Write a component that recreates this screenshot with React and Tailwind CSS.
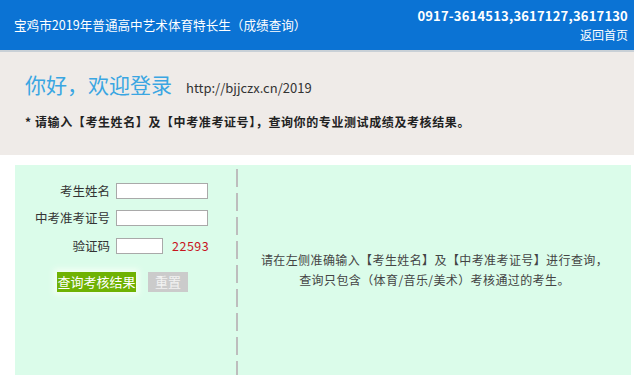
export default function App() {
  const font = { fontFamily: '"Noto Sans CJK SC", "Noto Sans", sans-serif' };
  const labelClass = "text-right text-[12.5px] text-[#333] leading-[16px]";
  const inputClass = "h-[16px] border border-[#a9a9a9] bg-white outline-none";

  return (
    <div className="w-[634px] h-[386px] bg-white overflow-hidden" style={font}>
      {/* Top bar */}
      <div className="h-[50px] bg-[#0b73d4] flex items-center justify-between pl-[14px] pr-[6px]">
        <div className="text-white text-[12.6px] leading-none">宝鸡市2019年普通高中艺术体育特长生（成绩查询）</div>
        <div className="flex flex-col items-end text-white">
          <div className="text-[13px] font-bold leading-[20px] tracking-[0.2px]">0917-3614513,3617127,3617130</div>
          <div className="text-[12px] leading-[18px]">返回首页</div>
        </div>
      </div>

      {/* Welcome */}
      <div className="h-[105px] bg-[#efebe8] border-t-2 border-[#c9d0d6] pl-[25px]">
        <div className="flex items-baseline gap-[14px] pt-[17px]">
          <span className="text-[21px] text-[#3aa6e2] leading-[30px]">你好，欢迎登录</span>
          <span className="text-[13px] text-[#333]">http://bjjczx.cn/2019</span>
        </div>
        <div className="mt-[14px] text-[12px] font-bold text-[#222] tracking-[0.6px]">
          * 请输入【考生姓名】及【中考准考证号】，查询你的专业测试成绩及考核结果。
        </div>
      </div>

      {/* Query panel */}
      <div className="mt-[10px] ml-[15px] mr-[3px] h-[210px] bg-[#dbfcea] flex">
        <div className="w-[221px] pt-[18px]">
          <div className="grid grid-cols-[95px_auto] gap-x-[6px] gap-y-[11px] items-center">
            <div className={labelClass}>考生姓名</div>
            <input className={`${inputClass} w-[92px]`} />
            <div className={labelClass}>中考准考证号</div>
            <input className={`${inputClass} w-[92px]`} />
            <div className={labelClass}>验证码</div>
            <div className="flex items-center gap-[9px]">
              <input className={`${inputClass} w-[47px]`} />
              <span className="text-[12.5px] text-[#c8141e] tracking-[0.5px]">22593</span>
            </div>
          </div>
          <div className="flex gap-[12px] pl-[42px] mt-[16px]">
            <button className="h-[20px] w-[79px] bg-[#6fb203] text-white text-[13px] leading-[20px] shadow-[0_0_6px_3px_#f4fff4]">
              查询考核结果
            </button>
            <button className="h-[20px] w-[40px] bg-[#cbcbcb] text-[#f2f2f2] text-[13px] leading-[20px]">
              重置
            </button>
          </div>
        </div>
        <div className="w-[2px] mt-[4px] bg-[repeating-linear-gradient(to_bottom,#bdbdbd_0px,#bdbdbd_18px,transparent_18px,transparent_24px)]" />
        <div className="flex-1 pt-[85px] text-center text-[12px] text-[#444] leading-[20px] tracking-[0.4px]">
          <div>请在左侧准确输入【考生姓名】及【中考准考证号】进行查询，</div>
          <div>查询只包含（体育/音乐/美术）考核通过的考生。</div>
        </div>
      </div>
    </div>
  );
}
